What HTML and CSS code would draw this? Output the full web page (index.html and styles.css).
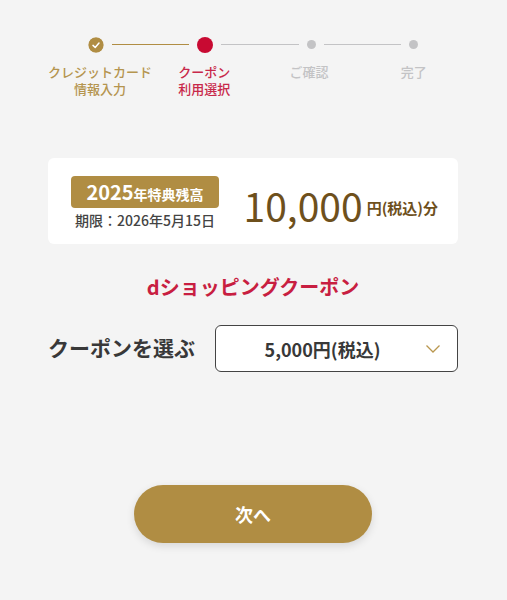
FILE: index.html
```html
<!DOCTYPE html>
<html lang="ja">
  <head>
    <meta charset="UTF-8" />
    <meta name="viewport" content="width=device-width, initial-scale=1.0" />
    <title>クーポン利用選択</title>
    <link rel="stylesheet" href="styles.css">
  </head>
  <body>
    <main class="container">
      <!-- 進捗ステップ -->
      <div class="steps">
        <div class="track">
          <svg class="dot" width="16" height="16" viewBox="0 0 16 16" aria-hidden="true">
            <circle cx="8" cy="8" r="7.7" fill="#b08d43" />
            <path d="M5 8.4 L7.2 10.5 L11 6" fill="none" stroke="#fff" stroke-width="1.5" stroke-linecap="round" stroke-linejoin="round" />
          </svg>
          <span class="line line-done"></span>
          <span class="dot dot-current"></span>
          <span class="line"></span>
          <span class="dot dot-next"></span>
          <span class="line"></span>
          <span class="dot dot-next"></span>
        </div>
        <ol class="labels">
          <li class="done">クレジットカード<br>情報入力</li>
          <li class="current" aria-current="step">クーポン<br>利用選択</li>
          <li>ご確認</li>
          <li>完了</li>
        </ol>
      </div>

      <!-- 特典残高 -->
      <section class="balance">
        <div class="period">
          <p class="badge"><span class="year">2025</span>年特典残高</p>
          <p class="limit">期限：2026年5月15日</p>
        </div>
        <p class="amount"><span class="price">10,000</span><span class="unit">円(税込)分</span></p>
      </section>

      <!-- クーポン選択フォーム -->
      <form>
        <h1>dショッピングクーポン</h1>
        <div class="field">
          <label for="coupon">クーポンを選ぶ</label>
          <div class="select-box">
            <select id="coupon" name="coupon">
              <option value="5000">5,000円(税込)</option>
              <option value="10000">10,000円(税込)</option>
            </select>
            <svg class="arrow" width="16" height="10" viewBox="0 0 16 10" aria-hidden="true">
              <path d="M1.5 1.5 L8 8 L14.5 1.5" fill="none" stroke="#b9974f" stroke-width="1.3" />
            </svg>
          </div>
        </div>
        <button type="submit" class="next-btn">次へ</button>
      </form>
    </main>
  </body>
</html>
```

FILE: styles.css
```css
* {
  box-sizing: border-box;
}

body {
  font-family: "Noto Sans CJK JP", sans-serif;
  margin: 0;
  background-color: #f4f4f4;
  color: #383838;
}

.container {
  max-width: 600px;
  margin: 0 auto;
  padding: 36px 49px 40px 48px;
}

p,
h1,
ol {
  margin: 0;
  padding: 0;
}

/* 進捗ステップ */
.track {
  display: flex;
  align-items: center;
  gap: 8px;
  height: 17px;
  padding: 0 40px;
}

.dot {
  flex: none;
  border-radius: 50%;
}

.dot-current {
  width: 16px;
  height: 16px;
  background-color: #c80a32;
}

.dot-next {
  width: 9px;
  height: 9px;
  background-color: #c3c3c5;
}

.line {
  flex: 1;
  height: 1px;
  background-color: #c3c3c5;
}

.line-done {
  background-color: #b08d43;
}

.labels {
  display: grid;
  grid-template-columns: 104px 1fr 1fr 1fr;
  margin: 10px -8px 0 0;
  list-style: none;
  font-size: 13px;
  font-weight: 500;
  line-height: 17px;
  text-align: center;
  white-space: nowrap;
  color: #c3c3c5;
}

.labels .done {
  color: #b5954f;
}

.labels .current {
  color: #c8284a;
}

/* 特典残高 */
.balance {
  display: flex;
  align-items: center;
  justify-content: space-between;
  margin-top: 61px;
  padding: 16px 20px 12px 23px;
  border-radius: 6px;
  background-color: #fff;
  white-space: nowrap;
}

.period {
  width: 148px;
  padding-top: 2px;
  text-align: center;
}

.badge {
  height: 32px;
  border-radius: 4px;
  background-color: #b08d43;
  color: #fff;
  font-size: 14px;
  font-weight: bold;
  line-height: 32px;
}

.year {
  font-size: 20px;
}

.limit {
  font-size: 14px;
  font-weight: 500;
  line-height: 24px;
  color: #444;
}

.amount {
  display: flex;
  align-items: center;
  gap: 4px;
  padding-top: 3px;
  font-size: 15px;
  font-weight: bold;
  line-height: 48px;
  color: #6e501c;
}

.price {
  font-size: 39px;
  font-weight: normal;
}

.unit {
  padding-top: 6px;
}

/* クーポン選択フォーム */
h1 {
  margin-top: 28px;
  font-size: 20px;
  line-height: 30px;
  text-align: center;
  color: #c81e41;
}

.field {
  display: flex;
  align-items: center;
  gap: 20px;
  margin-top: 23px;
}

.field label {
  font-size: 21px;
  font-weight: bold;
  line-height: 30px;
  padding-bottom: 4px;
  white-space: nowrap;
}

.select-box {
  position: relative;
  flex: 1;
}

select {
  display: block;
  width: 100%;
  height: 47px;
  padding: 0 28px 0 0;
  border: 1px solid #444;
  border-radius: 6px;
  background-color: #fff;
  color: #383838;
  font-family: inherit;
  font-size: 18px;
  font-weight: bold;
  text-align-last: center;
  appearance: none;
  cursor: pointer;
}

.arrow {
  position: absolute;
  top: 19px;
  right: 17px;
  pointer-events: none;
}

.next-btn {
  display: block;
  width: 58%;
  height: 58px;
  margin: 113px auto 0;
  border: none;
  border-radius: 29px;
  background-color: #b08d43;
  box-shadow: 0 3px 8px rgba(0, 0, 0, 0.12);
  color: #fff;
  font-family: inherit;
  font-size: 18px;
  font-weight: bold;
  cursor: pointer;
}

.next-btn:hover {
  background-color: #9c7b37;
}
```
